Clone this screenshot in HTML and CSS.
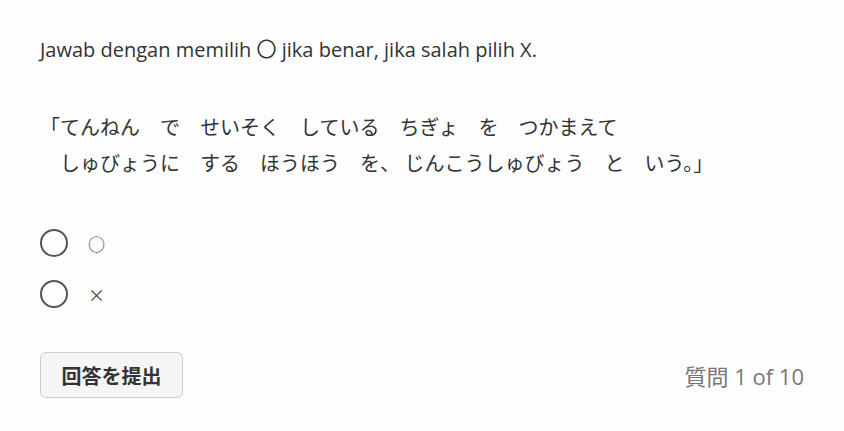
FILE: index.html
```html
<!DOCTYPE html>
<html lang="ja">
<head>
<meta charset="utf-8">
<link rel="stylesheet" href="styles.css">
</head>
<body>
<div class="quiz">
  <p class="instruction">Jawab dengan memilih 〇 jika benar, jika salah pilih X.</p>
  <div class="question">
    <div class="qline">「てんねん　で　せいそく　している　ちぎょ　を　つかまえて</div>
    <div class="qline">　しゅびょうに　する　ほうほう　を、 じんこうしゅびょう　と　いう。」</div>
  </div>
  <div class="options">
    <label class="option"><span class="radio"></span><span class="opt-label">○</span></label>
    <label class="option"><span class="radio"></span><span class="opt-label">×</span></label>
  </div>
  <div class="footer">
    <button class="submit">回答を提出</button>
    <span class="counter">質問 1 of 10</span>
  </div>
</div>
</body>
</html>
```
FILE: styles.css
```css
html, body {
  margin: 0;
  padding: 0;
  background: #fdfdfd;
}
body {
  font-family: "Open Sans", "Noto Sans CJK JP", sans-serif;
  color: #333;
}
.quiz {
  padding: 36px 40px 0 40px;
}
.instruction {
  margin: 0;
  font-size: 20px;
  line-height: 28px;
}
.question {
  margin-top: 45px;
  font-family: "Noto Sans CJK JP", sans-serif;
  font-size: 20px;
  line-height: 36px;
}
.options {
  margin-top: 48px;
  display: flex;
  flex-direction: column;
  gap: 23px;
}
.option {
  display: flex;
  align-items: center;
  gap: 20px;
  height: 28px;
}
.radio {
  width: 24px;
  height: 24px;
  border: 2px solid #555;
  border-radius: 50%;
  box-sizing: content-box;
}
.opt-label {
  font-family: "Noto Sans CJK JP", sans-serif;
  font-size: 17px;
  color: #444;
}
.footer {
  margin-top: 44px;
  display: flex;
  justify-content: space-between;
  align-items: center;
}
.submit {
  font-family: "Noto Sans CJK JP", sans-serif;
  font-weight: bold;
  font-size: 20px;
  color: #333;
  background: #f5f5f5;
  border: 1px solid #ccc;
  border-radius: 6px;
  width: 143px;
  height: 46px;
  padding: 0;
}
.counter {
  font-family: "Open Sans", "Noto Sans CJK JP", sans-serif;
  font-size: 22px;
  color: #777;
}
```
